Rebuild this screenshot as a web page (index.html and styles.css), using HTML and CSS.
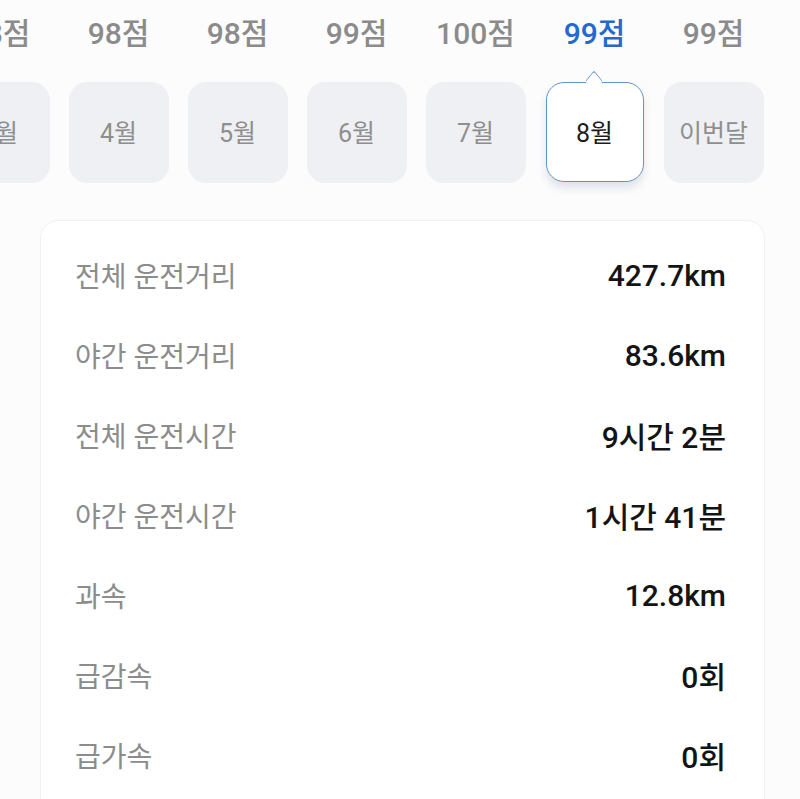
FILE: index.html
```html
<!DOCTYPE html>
<html>
    <head>
        <title>운전 점수</title>
        <link rel="stylesheet" href="styles.css">
    </head>
    <body>
        <div class="scores">
            <p class="score">98점</p>
            <p class="score">98점</p>
            <p class="score">98점</p>
            <p class="score">99점</p>
            <p class="score">100점</p>
            <p class="score active">99점</p>
            <p class="score">99점</p>
        </div>
        <div class="months">
            <div class="slot"><div class="month">3월</div></div>
            <div class="slot"><div class="month">4월</div></div>
            <div class="slot"><div class="month">5월</div></div>
            <div class="slot"><div class="month">6월</div></div>
            <div class="slot"><div class="month">7월</div></div>
            <div class="slot"><div class="month selected">8월</div></div>
            <div class="slot"><div class="month">이번달</div></div>
        </div>
        <div class="card">
            <div class="row"><span class="label">전체 운전거리</span><span class="value">427.7km</span></div>
            <div class="row"><span class="label">야간 운전거리</span><span class="value">83.6km</span></div>
            <div class="row"><span class="label">전체 운전시간</span><span class="value">9시간 2분</span></div>
            <div class="row"><span class="label">야간 운전시간</span><span class="value">1시간 41분</span></div>
            <div class="row"><span class="label">과속</span><span class="value">12.8km</span></div>
            <div class="row"><span class="label">급감속</span><span class="value">0회</span></div>
            <div class="row"><span class="label">급가속</span><span class="value">0회</span></div>
        </div>
    </body>
</html>
```

FILE: styles.css
```css
body{
    margin: 0;
    width: 800px;
    height: 799px;
    overflow: hidden;
    background-color: #fcfcfd;
    font-family: Roboto, "Noto Sans CJK KR", sans-serif;
}
p{
    margin: 0;
}
.scores{
    display: flex;
    margin-left: -60px;
    height: 62px;
    align-items: center;
}
.score{
    flex: 0 0 119px;
    text-align: center;
    font-size: 30px;
    font-weight: 500;
    color: #8b8b8b;
}
.score.active{
    color: #2369cf;
}
.months{
    display: flex;
    margin-left: -60px;
    margin-top: 20px;
}
.slot{
    flex: 0 0 119px;
    display: flex;
    justify-content: center;
}
.month{
    position: relative;
    width: 100px;
    height: 101px;
    box-sizing: border-box;
    border-radius: 18px;
    background-color: #eef0f3;
    display: flex;
    justify-content: center;
    align-items: center;
    padding-bottom: 3px;
    font-size: 25px;
    color: #8e8e8e;
}
.month.selected{
    width: 98px;
    height: 100px;
    background-color: #fff;
    border: 1.5px solid #6792c9;
    color: #1c1c1c;
    box-shadow: 0 6px 8px rgba(90, 110, 140, 0.18);
}
.month.selected::before{
    content: "";
    position: absolute;
    top: -9px;
    left: 50%;
    width: 13px;
    height: 13px;
    margin-left: -8px;
    background-color: #fff;
    border-top: 1.5px solid #6792c9;
    border-left: 1.5px solid #6792c9;
    border-top-left-radius: 3px;
    transform: rotate(45deg) skew(6deg, 6deg);
}
.card{
    margin: 37px 35px 0 40px;
    background-color: #fff;
    border: 1px solid #f0f1f3;
    border-radius: 18px;
    padding: 14px 38px 0 34px;
    height: 700px;
}
.row{
    display: flex;
    justify-content: space-between;
    align-items: center;
    height: 80px;
}
.label{
    font-size: 28px;
    color: #8c8c8c;
}
.value{
    font-size: 30px;
    font-weight: 500;
    color: #141414;
}
```
